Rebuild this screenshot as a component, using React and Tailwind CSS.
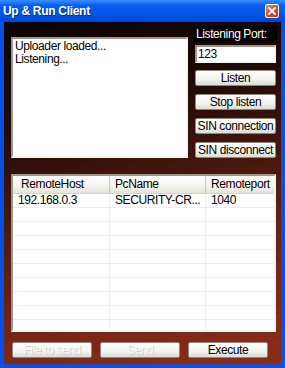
import React from "react";

const FONT = { fontFamily: '"Liberation Sans", Arial, sans-serif' };

const XpButton = ({ label, disabled, className = "" }) => (
  <div
    className={`flex items-center justify-center h-[16px] border border-[#8c8a7c] rounded-[2px] bg-[linear-gradient(#ffffff,#f2f2ee_60%,#dcdcd4)] text-[12px] leading-none tracking-[-0.4px] ${
      disabled ? "text-[#fafafa] [text-shadow:1px_1px_0_#cfcdc4]" : "text-black"
    } ${className}`}
  >
    {label}
  </div>
);

const rows = [
  ["192.168.0.3", "SECURITY-CR...", "1040"],
  ["", "", ""],
  ["", "", ""],
  ["", "", ""],
  ["", "", ""],
  ["", "", ""],
  ["", "", ""],
  ["", "", ""],
  ["", "", ""],
  ["", "", ""],
];

export default function App() {
  return (
    <div className="w-[285px] h-[368px] flex flex-col bg-[#0a4fe0] overflow-hidden" style={FONT}>
      {/* title bar */}
      <div className="h-[22px] shrink-0 flex items-center justify-between pl-[3px] pr-[6px] bg-[linear-gradient(#3a8cff,#0a5cf0_25%,#0054e3_70%,#0046d0)]">
        <span className="text-white font-bold text-[12px] tracking-[-0.3px] [text-shadow:1px_1px_0_#0a2a80]">
          Up &amp; Run Client
        </span>
        <div className="w-[14px] h-[14px] rounded-[2px] border border-white bg-[linear-gradient(135deg,#f08a6a,#d8502a_50%,#b83810)] flex items-center justify-center">
          <svg width="8" height="8" viewBox="0 0 8 8">
            <path d="M1 1 L7 7 M7 1 L1 7" stroke="white" strokeWidth="1.8" strokeLinecap="square" />
          </svg>
        </div>
      </div>

      {/* client area */}
      <div className="flex-1 mx-[4px] mb-[4px] bg-[linear-gradient(165deg,#0c0503_0%,#1e0906_25%,#4e190e_52%,#7a2616_78%,#8c2c1a_100%)] pl-[7px] flex flex-col">
        <div className="flex items-start">
          {/* memo */}
          <div className="mt-[15px] w-[177px] h-[121px] border-2 border-t-[#9a978c] border-l-[#9a978c] border-b-[#f4f4f0] border-r-[#f4f4f0] bg-white px-[2px] pt-[1px] text-[12px] leading-[13px] tracking-[-0.4px] text-black">
            <div>Uploader loaded...</div>
            <div>Listening...</div>
          </div>

          {/* right column */}
          <div className="ml-[5px] mt-[4px] w-[84px] flex flex-col">
            <div className="h-[16px] bg-black text-white text-[12px] tracking-[-0.4px] leading-[16px] pl-[3px]">
              Listening Port:
            </div>
            <div className="ml-[2px] mt-[3px] w-[81px] h-[18px] border-2 border-t-[#9a978c] border-l-[#9a978c] border-b-[#f4f4f0] border-r-[#f4f4f0] bg-white text-[12px] tracking-[-0.4px] leading-[14px] pl-[1px]">
              123
            </div>
            <div className="ml-[2px] w-[81px] mt-[7px] flex flex-col gap-[8px]">
              <XpButton label="Listen" />
              <XpButton label="Stop listen" />
              <XpButton label="SIN connection" />
              <XpButton label="SIN disconnect" />
            </div>
          </div>
        </div>

        {/* list view */}
        <div className="mt-[16px] w-[265px] h-[158px] border-2 border-t-[#9a978c] border-l-[#9a978c] border-b-[#f4f4f0] border-r-[#f4f4f0] bg-white overflow-hidden text-[12px] tracking-[-0.4px]">
          <div className="flex h-[18px] bg-[linear-gradient(#ffffff,#f4f3ee_60%,#e6e4d8)] border-b border-[#d6d3c4]">
            <div className="w-[97px] pl-[8px] border-r border-[#c8c5b5] leading-[17px]">RemoteHost</div>
            <div className="w-[96px] pl-[5px] border-r border-[#c8c5b5] leading-[17px]">PcName</div>
            <div className="flex-1 pl-[5px] leading-[17px]">Remoteport</div>
          </div>
          {rows.map((r, i) => (
            <div key={i} className="flex h-[14px] border-b border-[#f0ede2]">
              <div className="w-[97px] pl-[5px] border-r border-[#f0ede2] leading-[13px]">{r[0]}</div>
              <div className="w-[96px] pl-[5px] border-r border-[#f0ede2] leading-[13px] whitespace-nowrap overflow-hidden">{r[1]}</div>
              <div className="flex-1 pl-[5px] leading-[13px]">{r[2]}</div>
            </div>
          ))}
        </div>

        {/* bottom buttons */}
        <div className="mt-[10px] ml-[1px] flex gap-[8px]">
          <XpButton label="File to send" disabled className="w-[80px]" />
          <XpButton label="Send" disabled className="w-[80px]" />
          <XpButton label="Execute" className="w-[80px]" />
        </div>
      </div>
    </div>
  );
}
